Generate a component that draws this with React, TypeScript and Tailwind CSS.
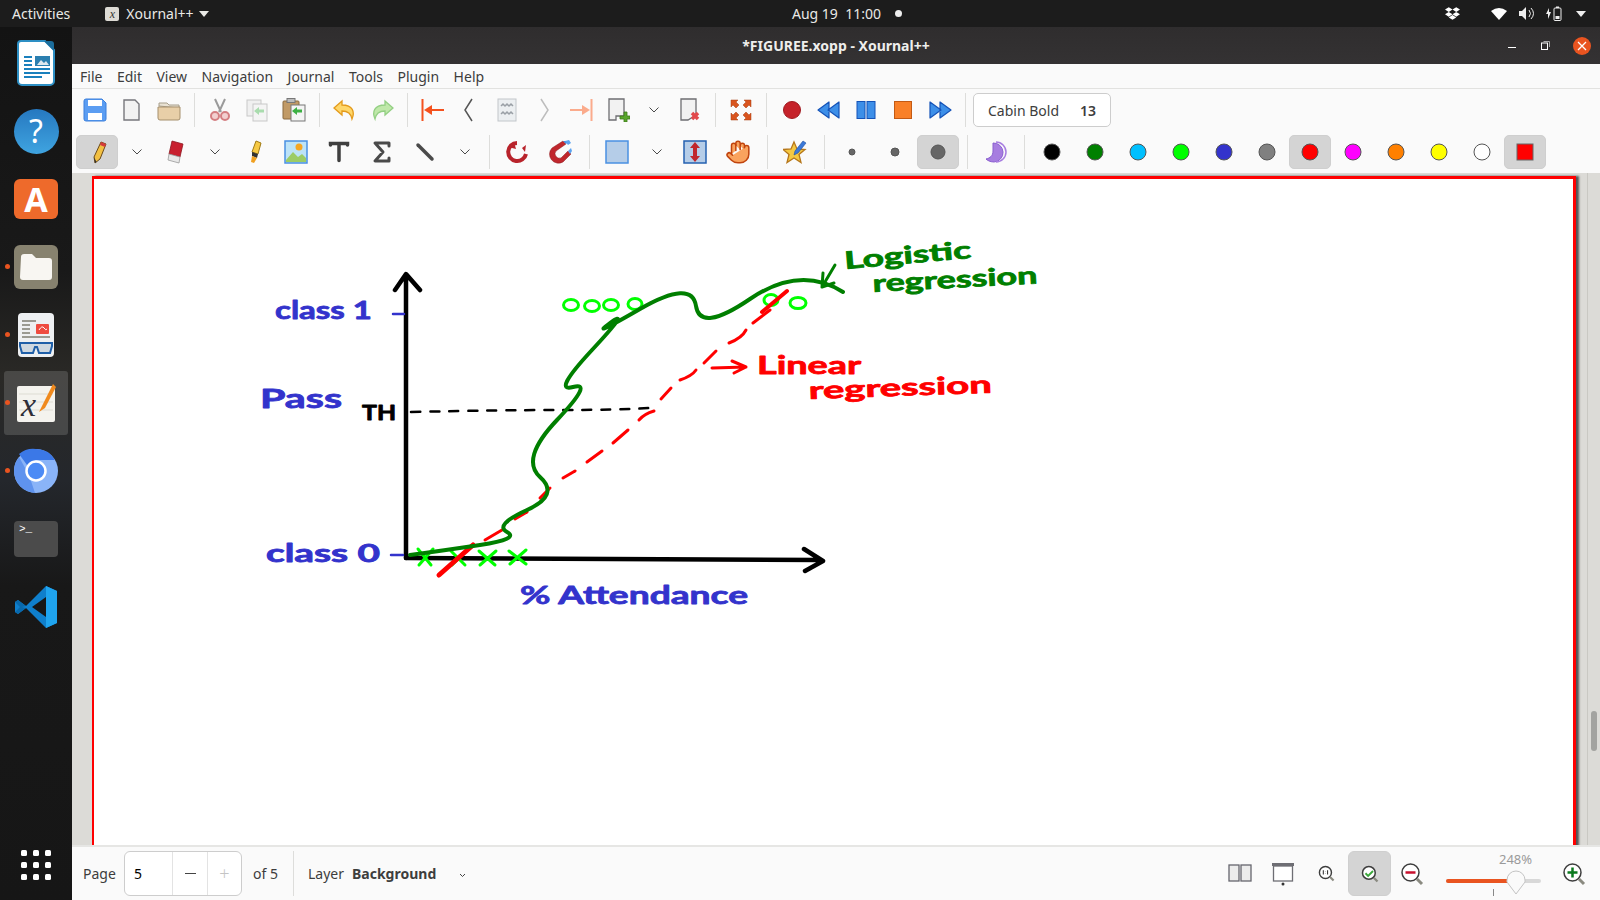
import type { ReactNode } from 'react';
import { Hand } from 'lucide-react';
import { FaDropbox } from 'react-icons/fa';

const menus = ['File', 'Edit', 'View', 'Navigation', 'Journal', 'Tools', 'Plugin', 'Help'];

const colors = [
  { c: '#000000' },
  { c: '#008000' },
  { c: '#00c0ff' },
  { c: '#00ff00' },
  { c: '#3333cc' },
  { c: '#808080' },
  { c: '#ff0000', on: true },
  { c: '#ff00ff' },
  { c: '#ff8000' },
  { c: '#ffff00' },
  { c: '#ffffff' },
];

const Ico = ({ children, size = 24 }: { children: ReactNode; size?: number }) => (
  <svg width={size} height={size} viewBox="0 0 24 24" fill="none">
    {children}
  </svg>
);

// toolbar pieces
const B1 = ({ children }: { children: ReactNode }) => (
  <div className="w-[37px] h-[34px] shrink-0 flex items-center justify-center">{children}</div>
);

const B2 = ({ children, on }: { children: ReactNode; on?: boolean }) => (
  <div className="w-[43px] h-[34px] shrink-0 flex items-center justify-start">
    <div className={`w-[42px] h-[34px] rounded-[5px] flex items-center justify-center ${on ? 'bg-[#d4d4d4] border border-[#cfcfcf]' : ''}`}>
      {children}
    </div>
  </div>
);

const Sep = () => (
  <div className="w-[14px] h-[34px] shrink-0 flex justify-center">
    <div className="w-px h-full bg-[#dddddb]" />
  </div>
);

const Chevron = () => (
  <div className="w-[35px] h-[34px] shrink-0 flex items-center justify-center">
    <svg width="12" height="8" viewBox="0 0 12 8" fill="none">
      <path d="M1.5 1.5 6 6l4.5-4.5" stroke="#4a4a4a" strokeWidth="1" />
    </svg>
  </div>
);

const Dot = ({ c, r = 8 }: { c: string; r?: number }) => (
  <svg width="20" height="20" viewBox="0 0 20 20">
    <circle cx="10" cy="10" r={r} fill={c} stroke="#555" strokeWidth="1" />
  </svg>
);

const Doc = ({ fade }: { fade?: boolean }) => (
  <path d="M4 2h11l4 4v16H4z" fill="#f2f2f2" stroke={fade ? '#b5b5b5' : '#77777c'} strokeWidth="1.4" />
);

const Zoomer = ({ children }: { children?: ReactNode }) => (
  <Ico>
    <circle cx="10.5" cy="10.5" r="8.5" fill="#fff" stroke="#3d3d3d" strokeWidth="1.5" />
    <path d="M17 17l5 5" stroke="#8a8a80" strokeWidth="3" />
    {children}
  </Ico>
);

const Ink = ({ x, y, len, size, color, rot = 0, children }: { x: number; y: number; len: number; size: number; color: string; rot?: number; children: string }) => (
  <text
    x={x}
    y={y}
    textLength={len}
    lengthAdjust="spacingAndGlyphs"
    transform={`rotate(${rot} ${x} ${y})`}
    fontSize={size}
    fill={color}
    stroke={color}
    strokeWidth="0.8"
    strokeLinejoin="round"
    className="font-['Lato',sans-serif] font-bold"
  >
    {children}
  </text>
);

const redDashes = [
  'M485 540 502 530', 'M515 519 527 512', 'M540 498 550 488', 'M563 478 575 471', 'M587 462 602 451',
  'M613 443 628 430', 'M639 420Q644 414 654 411', 'M661 399 671 388', 'M680 380Q692 376 696 370', 'M704 363 716 351',
  'M729 343Q742 338 746 330', 'M753 323 770 310',
];

const Drawing = () => (
  <svg className="absolute left-0 top-0 w-[1479px] h-[800px]" viewBox="94 179 1479 800" fill="none" strokeLinecap="round" strokeLinejoin="round">
    <path d="M411 412Q500 410 560 410T650 408" stroke="#000" strokeWidth="2.5" strokeDasharray="9 10" />
    <path d="M406 558V275M395 290 406 274 420 290" stroke="#000" strokeWidth="4.5" />
    <path d="M406 558 820 560M804 549 823 561 805 571" stroke="#000" strokeWidth="4.5" />

    <g stroke="#00ff00" strokeWidth="3">
      <ellipse cx="571" cy="305" rx="7.5" ry="5.5" />
      <ellipse cx="592" cy="306" rx="7.5" ry="5.5" />
      <ellipse cx="611" cy="305" rx="7.5" ry="5.5" />
      <ellipse cx="635" cy="304" rx="7" ry="5.5" />
      <ellipse cx="771" cy="300" rx="7" ry="5.5" />
      <ellipse cx="798" cy="303" rx="8" ry="5.5" />
      <path d="M418 549 431 565M433 549 419 565" />
      <path d="M451 551 465 565M466 551 452 565" />
      <path d="M479 551 495 565M496 551 480 565" />
      <path d="M509 551 526 564M526 550 510 564" />
    </g>

    <path d="M439 575 473 545" stroke="#ff0000" strokeWidth="5" />
    <g stroke="#ff0000" strokeWidth="3">
      {redDashes.map(d => <path key={d} d={d} />)}
      <path d="M762 312 787 291" strokeWidth="4" />
      <path d="M712 368 746 367M732 361 746 367 734 373" />
    </g>

    <path d="M410 555Q440 551 480 545T507 532 527 510 540 477 557 420 573 387 592 350 610 323 640 309 696 306 750 299 843 292" stroke="#007f00" strokeWidth="4" />
    <path d="M835 265 822 287M823 273 822 287 834 283" stroke="#007f00" strokeWidth="3" />

    <path d="M393 314H404M391 555H403" stroke="#3333cc" strokeWidth="2.5" />

    <Ink x={275} y={319} len={97} size={25} color="#3333cc">class 1</Ink>
    <Ink x={260} y={408} len={82} size={27} color="#3333cc">Pass</Ink>
    <Ink x={362} y={420} len={34} size={20} color="#000000">TH</Ink>
    <Ink x={266} y={562} len={114} size={24} color="#3333cc">class 0</Ink>
    <Ink x={520} y={604} len={228} size={25} color="#3333cc">% Attendance</Ink>
    <Ink x={845} y={269} len={127} size={24} color="#007f00" rot={-5}>Logistic</Ink>
    <Ink x={873} y={292} len={165} size={24} color="#007f00" rot={-3}>regression</Ink>
    <Ink x={757} y={374} len={104} size={25} color="#ff0000">Linear</Ink>
    <Ink x={809} y={399} len={183} size={24} color="#ff0000" rot={-2}>regression</Ink>
  </svg>
);

const DockSlot = ({ children, running, active }: { children: ReactNode; running?: boolean; active?: boolean }) => (
  <div className="relative w-full h-[68px] flex items-center justify-center shrink-0">
    {active && <div className="absolute left-[4px] top-[2px] w-[64px] h-[64px] rounded-[3px] bg-white/15" />}
    {running && <div className="absolute left-[5px] top-[31px] w-[5px] h-[5px] rounded-full bg-[#e95420]" />}
    <div className="relative">{children}</div>
  </div>
);

const Dock = () => (
  <div className="w-[72px] shrink-0 flex flex-col pt-[2px] bg-[linear-gradient(180deg,#131313_0%,#191919_28%,#2a2926_40%,#24272c_52%,#181818_64%,#161616_100%)]">
    <DockSlot>
      <svg width="38" height="46" viewBox="0 0 38 46">
        <path d="M4 1h24l9 9v31a4 4 0 0 1-4 4H5a4 4 0 0 1-4-4V4a3 3 0 0 1 3-3z" fill="#fff" stroke="#2d8fc4" strokeWidth="2" />
        <path d="M27 1h7a3 3 0 0 1 3 3v7z" fill="#1b6d9c" />
        <path d="M7 17h8M7 21h8M7 25h8M7 29h26M7 33h26M7 37h18" stroke="#1a80bd" strokeWidth="2" />
        <rect x="18" y="16" width="15" height="10" fill="#2b7fb0" />
        <path d="M20 25l4-5 3 3 2-2 3 4z" fill="#dfe8ee" />
      </svg>
    </DockSlot>
    <DockSlot>
      <div className="w-[45px] h-[45px] rounded-full bg-[linear-gradient(180deg,#2678c0,#3fa4e0)] flex items-center justify-center text-white text-[32px] font-['Noto_Sans',sans-serif]">?</div>
    </DockSlot>
    <DockSlot>
      <div className="w-[44px] h-[40px] rounded-[6px] bg-[#ee6a2b] flex items-center justify-center text-white text-[34px] leading-none font-bold font-['Noto_Sans',sans-serif]">A</div>
    </DockSlot>
    <DockSlot running>
      <div className="w-[44px] h-[44px] rounded-[6px] bg-[#87826f] flex items-center justify-center">
        <svg width="34" height="28" viewBox="0 0 34 28">
          <path d="M2 4a3 3 0 0 1 3-3h8l4 4h13a3 3 0 0 1 3 3v16a3 3 0 0 1-3 3H4a3 3 0 0 1-3-3z" fill="#f8f6f2" />
        </svg>
      </div>
    </DockSlot>
    <DockSlot running>
      <svg width="38" height="46" viewBox="0 0 38 46">
        <rect x="1" y="1" width="36" height="44" rx="4" fill="#eef0f2" />
        <path d="M5 9h14M5 13h8M5 17h8M5 21h8M5 25h28" stroke="#9a9a92" strokeWidth="2" />
        <rect x="19" y="12" width="13" height="10" rx="1" fill="#ee4b40" />
        <path d="M22 18q3-5 5-2t3 1" stroke="#fff" fill="none" />
        <path d="M3 31h32v3l-2 7H22l-2-6h-2l-2 6H5l-2-7z" fill="#cfd8e0" stroke="#1f5fa8" strokeWidth="2" />
      </svg>
    </DockSlot>
    <DockSlot running active>
      <svg width="42" height="42" viewBox="0 0 42 42">
        <rect x="2" y="4" width="38" height="36" rx="2" fill="#f4f3ee" />
        <path d="M4 12h34M4 20h34M4 28h34" stroke="#dddcd3" />
        <text x="6" y="34" fontSize="34" fill="#2e2e38" className="font-['Liberation_Serif',serif] italic">x</text>
        <path d="M38 2 27 24l-3 6 6-4L41 5z" fill="#f08a1e" />
      </svg>
    </DockSlot>
    <DockSlot running>
      <svg width="46" height="46" viewBox="0 0 46 46">
        <circle cx="23" cy="23" r="22" fill="#8ab4f8" />
        <path d="M23 1a22 22 0 0 1 19 11H23l-9 5-8-11A22 22 0 0 1 23 1z" fill="#3b78e7" />
        <path d="M1 23A22 22 0 0 1 6 9l10 18 6 18A22 22 0 0 1 1 23z" fill="#5f93ee" />
        <circle cx="23" cy="23" r="9.5" fill="#4c8bf5" stroke="#fff" strokeWidth="2.5" />
      </svg>
    </DockSlot>
    <DockSlot>
      <div className="w-[44px] h-[36px] rounded-[4px] bg-[#4b4b4b] relative">
        <span className="absolute left-[5px] top-[0px] text-white text-[11px] leading-[16px] font-['Liberation_Mono',monospace]">&gt;_</span>
      </div>
    </DockSlot>
    <DockSlot>
      <svg width="44" height="44" viewBox="0 0 44 44">
        <path d="M32 1 12 21 4 15 1 17v10l3 2 8-6 20 20 11-5V6z" fill="#0f7fcc" />
        <path d="M32 1l11 5v32l-11 5z" fill="#1fa4ef" />
        <path d="M32 12v20L18 22z" fill="#171717" />
        <path d="M1 17l3-2 8 6-4 1 4 1-8 6-3-2 5-5z" fill="#0868ac" />
      </svg>
    </DockSlot>
    <div className="mt-auto h-[70px] flex items-center justify-center">
      <div className="grid grid-cols-3 gap-x-[6px] gap-y-[6px]">
        {Array.from({ length: 9 }).map((_, i) => (
          <div key={i} className="w-[6px] h-[6px] rounded-[1.5px] bg-white" />
        ))}
      </div>
    </div>
  </div>
);

const TopBar = () => (
  <div className="h-[27px] shrink-0 flex items-center bg-[#1c1c1c] text-[#e9e9e6] text-[14px] font-['Noto_Sans',sans-serif]">
    <div className="w-[792px] shrink-0 flex items-center">
      <span className="ml-[12px]">Activities</span>
      <div className="ml-[35px] w-[14px] h-[14px] rounded-[2px] bg-[#dddbd5] flex items-center justify-center text-[#333] text-[12px] leading-none italic font-['Liberation_Serif',serif]">x</div>
      <span className="ml-[7px]">Xournal++</span>
      <svg className="ml-[5px]" width="10" height="6" viewBox="0 0 10 6"><path d="M0 0h10L5 6z" fill="#e9e9e6" /></svg>
    </div>
    <span className="whitespace-pre">Aug 19  11:00</span>
    <div className="ml-[14px] w-[7px] h-[7px] rounded-full bg-[#eeeeee]" />
    <div className="ml-auto flex items-center pr-[14px]">
      <FaDropbox className="mr-[31px] text-[15px] text-white" />
      <svg className="mr-[12px]" width="16" height="13" viewBox="0 0 16 13"><path d="M0 4Q8-2 16 4l-8 9z" fill="#fff" /></svg>
      <svg className="mr-[12px]" width="15" height="13" viewBox="0 0 15 13">
        <path d="M0 4h3l4-4v13L3 9H0z" fill="#eee" />
        <path d="M10 3q3 3.500 0 7M12 1q5 5.500 0 11" stroke="#eee" fill="none" />
      </svg>
      <svg className="mr-[14px]" width="16" height="15" viewBox="0 0 16 15">
        <path d="M3 2 0 8h2v5l3-7H3z" fill="#eee" />
        <rect x="8" y="2" width="7" height="12.500" rx="1" fill="none" stroke="#eee" />
        <rect x="9.500" y="10" width="4" height="3" fill="#eee" />
        <rect x="10" y="0.500" width="3" height="1.500" fill="#eee" />
      </svg>
      <svg width="10" height="6" viewBox="0 0 10 6"><path d="M0 0h10L5 6z" fill="#eee" /></svg>
    </div>
  </div>
);

const TitleBar = () => (
  <div className="h-[37px] shrink-0 grid grid-cols-[1fr_auto_1fr] items-center bg-[linear-gradient(180deg,#2f2d2e,#343233)] font-['Noto_Sans',sans-serif]">
    <div />
    <span className="text-[#eeeeec] text-[14px] font-bold">*FIGUREE.xopp - Xournal++</span>
    <div className="flex items-center justify-end pr-[9px]">
      <div className="w-[8px] h-px bg-white mr-[25px] mt-[3px]" />
      <svg className="mr-[23px]" width="9" height="9" viewBox="0 0 9 9" fill="none">
        <rect x="0.500" y="2" width="6" height="6.500" stroke="#fff" />
        <path d="M2.500 0.500H8.500V6" stroke="#aaa" />
      </svg>
      <div className="w-[18px] h-[18px] rounded-full bg-[#e95420] flex items-center justify-center">
        <svg width="10" height="10" viewBox="0 0 10 10"><path d="M1 1l8 8M9 1 1 9" stroke="#fff" strokeWidth="1.300" /></svg>
      </div>
    </div>
  </div>
);

const MenuBar = () => (
  <div className="h-[25px] shrink-0 flex items-center pl-[8px] gap-[14.500px] bg-[#fafafa] border-b border-[#e2e2e0] text-[14px] text-[#3d3d3d] font-['Noto_Sans',sans-serif]">
    {menus.map(m => <span key={m}>{m}</span>)}
  </div>
);

const ToolbarTop = () => (
  <div className="h-[42px] shrink-0 flex items-center pl-[4px] bg-[#fafafa]">
    <B1>
      <Ico>
        <path d="M3 1h16l4 4v16a2 2 0 0 1-2 2H3a2 2 0 0 1-2-2V3a2 2 0 0 1 2-2z" fill="#5b9df2" stroke="#3a7fdc" />
        <rect x="5" y="2" width="14" height="6" fill="#fff" />
        <rect x="5" y="15" width="14" height="7" fill="#fff" />
      </Ico>
    </B1>
    <B1><Ico><Doc /></Ico></B1>
    <B1>
      <Ico>
        <path d="M2 8V5h8l2 2h10v3z" fill="#e9e2d4" stroke="#a89f8c" />
        <path d="M1 9h22v11a2 2 0 0 1-2 2H3a2 2 0 0 1-2-2z" fill="#e8cfa8" stroke="#a58f6d" />
      </Ico>
    </B1>
    <Sep />
    <B1>
      <Ico>
        <path d="M7 1l6 13M17 1l-6 13" stroke="#9b9b9b" strokeWidth="2" />
        <circle cx="7" cy="18" r="4" fill="#f2d0d0" stroke="#d47f82" strokeWidth="2" />
        <circle cx="17" cy="18" r="4" fill="#f2d0d0" stroke="#d47f82" strokeWidth="2" />
      </Ico>
    </B1>
    <B1>
      <Ico>
        <rect x="2" y="2" width="14" height="16" fill="#f0f0f0" stroke="#c8c8c8" />
        <rect x="8" y="6" width="14" height="17" fill="#f4f4f4" stroke="#c8c8c8" />
        <path d="M9 13l5-4v2.500h5v3h-5V17z" fill="#a9dcae" />
      </Ico>
    </B1>
    <B1>
      <Ico>
        <rect x="1" y="3" width="16" height="18" rx="1" fill="#c19a66" stroke="#8a6b40" />
        <rect x="5" y="0.500" width="8" height="4" fill="#bbb" stroke="#777" />
        <rect x="9" y="7" width="14" height="16" fill="#f4f4f4" stroke="#777" />
        <path d="M10 13l5-4v2.500h5v3h-5V17z" fill="#3cb043" />
      </Ico>
    </B1>
    <Sep />
    <B1>
      <Ico>
        <path d="M9 3 1 10l8 7v-4c6 0 9 2 10 8 3-7 1-14-10-14z" fill="#ffd76a" stroke="#e39a1b" strokeWidth="1.300" />
      </Ico>
    </B1>
    <B1>
      <Ico>
        <path d="M15 3l8 7-8 7v-4c-6 0-9 2-10 8-3-7-1-14 10-14z" fill="#bfe8a9" stroke="#93cf83" strokeWidth="1.300" />
      </Ico>
    </B1>
    <Sep />
    <B1>
      <Ico>
        <path d="M1.500 1v22" stroke="#f4511e" strokeWidth="2" />
        <path d="M23 12H6" stroke="#f4511e" strokeWidth="2" />
        <path d="M11 7 3 12l8 5z" fill="#f4511e" />
      </Ico>
    </B1>
    <B1>
      <Ico><path d="M14 1 7 12l7 11" stroke="#555" strokeWidth="1.500" /></Ico>
    </B1>
    <B1>
      <Ico>
        <rect x="3" y="1" width="18" height="22" fill="#eceff1" stroke="#c2c6ca" />
        <path d="M6 8l2-2 2 2 2-2 2 2 2-2 2 2M6 16l2-2 2 2 2-2 2 2 2-2 2 2" stroke="#9aa0a6" strokeWidth="1.500" />
      </Ico>
    </B1>
    <B1>
      <Ico><path d="M9 1l7 11-7 11" stroke="#bdbdbd" strokeWidth="1.500" /></Ico>
    </B1>
    <B1>
      <Ico>
        <path d="M22.500 1v22" stroke="#fbab8c" strokeWidth="2" />
        <path d="M1 12h17" stroke="#fbab8c" strokeWidth="2" />
        <path d="M13 7l8 5-8 5z" fill="#fbab8c" />
      </Ico>
    </B1>
    <B1>
      <Ico>
        <path d="M3 1h15v17H10v4H3z" fill="#f2f2f2" stroke="#6e6e72" strokeWidth="1.300" />
        <path d="M14 18h4v-4h3v4h3v3h-3v3h-3v-3h-4z" fill="#58a62b" stroke="#3d7a1a" strokeWidth="0.800" />
      </Ico>
    </B1>
    <Chevron />
    <B1>
      <Ico>
        <path d="M3 1h15v16l-8 5H3z" fill="#f2f2f2" stroke="#6e6e72" strokeWidth="1.300" />
        <path d="M14 15l6 6M20 15l-6 6" stroke="#e2494c" strokeWidth="3.500" />
      </Ico>
    </B1>
    <Sep />
    <B1>
      <Ico>
        <g fill="#d9541e" stroke="#a63e12" strokeWidth="0.500">
          <path d="M2 2h7L7 4l3 3-3 3-3-3-2 2z" />
          <path d="M22 2h-7l2 2-3 3 3 3 3-3 2 2z" />
          <path d="M2 22h7l-2-2 3-3-3-3-3 3-2-2z" />
          <path d="M22 22h-7l2-2-3-3 3-3 3 3 2-2z" />
        </g>
      </Ico>
    </B1>
    <Sep />
    <B1>
      <Ico><circle cx="12" cy="12" r="8.500" fill="#c5222a" stroke="#a01a20" /></Ico>
    </B1>
    <B1>
      <Ico>
        <path d="M12 4v16L1 12zM22 4v16L11 12z" fill="#3d8fe8" stroke="#1553b8" strokeWidth="1.200" strokeLinejoin="round" />
      </Ico>
    </B1>
    <B1>
      <Ico>
        <rect x="3" y="3.500" width="8" height="17" fill="#3d8fe8" stroke="#1553b8" />
        <rect x="13" y="3.500" width="8" height="17" fill="#3d8fe8" stroke="#1553b8" />
      </Ico>
    </B1>
    <B1>
      <Ico><rect x="3.500" y="3.500" width="17" height="17" fill="#f98028" stroke="#c35a14" /></Ico>
    </B1>
    <B1>
      <Ico>
        <path d="M2 4v16l11-8zM12 4v16l11-8z" fill="#3d8fe8" stroke="#1553b8" strokeWidth="1.200" strokeLinejoin="round" />
      </Ico>
    </B1>
    <Sep />
    <div className="ml-px w-[138px] h-[34px] rounded-[5px] border border-[#cdcdcd] bg-white flex items-center justify-between pl-[14px] pr-[14px] text-[14px] text-[#3d3d3d] font-['Noto_Sans',sans-serif]">
      <span>Cabin Bold</span>
      <span className="font-semibold">13</span>
    </div>
  </div>
);

const ToolbarBottom = () => (
  <div className="h-[42px] shrink-0 flex items-center pl-[4px] bg-[#fafafa]">
    <B2 on>
      <Ico>
        <path d="M16 2l5 2-6 15-5 4-1-6z" fill="#f2c042" stroke="#6b4a1a" strokeWidth="1" />
        <path d="M16 2l5 2-1 3-5-2z" fill="#d43a3a" />
        <path d="M9 17l1 6 1.500-1z" fill="#333" />
      </Ico>
    </B2>
    <Chevron />
    <B2>
      <Ico>
        <path d="M9 1l11 3-3 13-11-3z" fill="#c8202f" stroke="#8d1620" strokeWidth="0.800" />
        <path d="M6 14l11 3-1 6-11-3z" fill="#e8e8e8" stroke="#999" strokeWidth="0.800" />
      </Ico>
    </B2>
    <Chevron />
    <B2>
      <Ico>
        <path d="M15 1l5 2-3 11-6-2z" fill="#f6c944" stroke="#a07a14" />
        <path d="M11 12l6 2-1 4-5-2z" fill="#333" />
        <path d="M11 16l5 2-3 5-3-1z" fill="#f0a020" />
      </Ico>
    </B2>
    <B2>
      <Ico>
        <rect x="1" y="1" width="22" height="22" fill="#bde3f7" stroke="#4a90e2" strokeWidth="1.500" />
        <circle cx="15" cy="7" r="3.500" fill="#f5a623" />
        <path d="M2 20l7-8 5 5 4-3 4 4v4H2z" fill="#9ccc65" />
      </Ico>
    </B2>
    <B2>
      <Ico><path d="M3.500 5V3.500h17V5M12 3.500v17" stroke="#3f3f3f" strokeWidth="3.500" strokeLinecap="round" /></Ico>
    </B2>
    <B2>
      <Ico><path d="M19 6V3H5l8 9-8 9h14v-3" stroke="#4a4a4a" strokeWidth="3" strokeLinecap="round" strokeLinejoin="round" /></Ico>
    </B2>
    <B2>
      <Ico><path d="M5 5l14 14" stroke="#4a4a4a" strokeWidth="3.500" strokeLinecap="round" /></Ico>
    </B2>
    <Chevron />
    <Sep />
    <B2>
      <Ico>
        <path d="M21 14a9 9 0 1 1-9-11" stroke="#b8232b" strokeWidth="4" />
        <path d="M3 7 9 2l2 7z" fill="#b8232b" />
        <path d="M21 5l-1 7-3-4z" fill="#b8232b" />
      </Ico>
    </B2>
    <B2>
      <Ico>
        <path d="M18 4 8 11a4.500 4.500 0 0 0 5 7l7-7 3 3-8 8a9 9 0 0 1-11-14L15 1z" fill="#c0272d" stroke="#8a1a1f" strokeWidth="0.500" />
        <path d="M15 1l3 3 2-2-1-1z" fill="#4a90e2" />
        <path d="M17 1l4-1 2 3-3 2zM20 11l3-3 1 3-2 3z" fill="#5ba3f0" />
      </Ico>
    </B2>
    <Sep />
    <B2>
      <Ico><rect x="1" y="1" width="22" height="22" fill="#b5cde8" stroke="#4a90e2" strokeWidth="1.500" /></Ico>
    </B2>
    <Chevron />
    <B2>
      <Ico>
        <rect x="1" y="1" width="22" height="22" fill="#b5cde8" stroke="#2460b0" strokeWidth="1.500" />
        <path d="M12 2l-5 6h3v8H7l5 6 5-6h-3V8h3z" fill="#c0272d" />
      </Ico>
    </B2>
    <B2>
      <Hand size={26} fill="#faa35e" stroke="#c0440e" strokeWidth={1.4} />
    </B2>
    <Sep />
    <B2>
      <Ico>
        <path d="M11 2l3 7 8 .5-6 5 2 8-7-4.500-7 4.500 2-8-6-5 8-.5z" fill="#f5c842" stroke="#b5761a" strokeWidth="1.300" />
        <path d="M20 1l3 2-8 10-4 2 1-4z" fill="#3b78d8" stroke="#1f4f9e" strokeWidth="0.600" />
      </Ico>
    </B2>
    <Sep />
    <B2><Dot c="#666" r={3} /></B2>
    <B2><Dot c="#666" r={4} /></B2>
    <B2 on><Dot c="#666" r={7} /></B2>
    <Sep />
    <B2>
      <Ico>
        <path d="M10 3a9.500 9.500 0 0 1 1 19c-4 0-7-2-8-3 4-1 7-3 7-8z" fill="#a77de0" stroke="#8a5fd0" />
        <path d="M13 2a10 10 0 0 1 0 20" stroke="#a77de0" strokeWidth="1.500" />
      </Ico>
    </B2>
    <Sep />
    {colors.map(k => (
      <B2 key={k.c} on={k.on}><Dot c={k.c} /></B2>
    ))}
    <B2 on>
      <svg width="18" height="18" viewBox="0 0 18 18"><rect x="1" y="1" width="16" height="16" fill="#ff0000" stroke="#666" /></svg>
    </B2>
  </div>
);

const Canvas = () => (
  <div className="flex-1 min-h-0 flex overflow-hidden bg-[#dcdbd7]">
    <div className="relative ml-[20px] mt-[3px] w-[1484px] h-[800px] shrink-0 bg-white border-[3px] border-b-0 border-[#ff0000] border-l-2 shadow-[3px_0_2px_#555]">
      <Drawing />
    </div>
    <div className="relative ml-[11px] flex-1 border-l border-[#c9c8c3]">
      <div className="absolute left-[3px] top-[538px] w-[6px] h-[40px] rounded-full bg-[#a3a3a0]" />
    </div>
  </div>
);

const BottomBar = () => (
  <div className="h-[55px] shrink-0 flex items-center pl-[11px] pr-[4px] bg-[#fafafa] border-t-2 border-[#e6e6e4] text-[14px] text-[#3d3d3d] font-['Noto_Sans',sans-serif]">
    <span className="w-[41px]">Page</span>
    <div className="w-[118px] h-[45px] flex items-stretch rounded-[6px] border border-[#cdcdcd] bg-white">
      <div className="w-[47px] flex items-center pl-[9px] text-black">5</div>
      <div className="w-[35px] flex items-center justify-center border-l border-[#e3e3e3]"><div className="w-[11px] h-px bg-[#444]" /></div>
      <div className="flex-1 flex items-center justify-center border-l border-[#e3e3e3] text-[#c4c4c4] text-[18px] font-light">+</div>
    </div>
    <span className="ml-[11px] w-[40px]">of 5</span>
    <div className="w-px h-[45px] bg-[#dddddb]" />
    <span className="ml-[14px] w-[44px]">Layer</span>
    <span className="font-bold">Background</span>
    <svg className="ml-[23px] mt-[3px]" width="7" height="5" viewBox="0 0 7 5"><path d="M1 1l2.500 2.500L6 1" stroke="#444" fill="none" /></svg>
    <div className="ml-auto flex items-center">
      <B2>
        <Ico>
          <rect x="1" y="3" width="10" height="16" fill="#ececec" stroke="#66666e" strokeWidth="1.300" />
          <rect x="13" y="3" width="10" height="16" fill="#ececec" stroke="#66666e" strokeWidth="1.300" />
        </Ico>
      </B2>
      <B2>
        <Ico>
          <rect x="1" y="1" width="22" height="3" fill="#6e6e74" />
          <rect x="2.500" y="4" width="19" height="15" fill="#fff" stroke="#6e6e74" strokeWidth="1.300" />
          <circle cx="12" cy="22" r="1.500" fill="#333" />
        </Ico>
      </B2>
      <B2>
        <svg width="17" height="17" viewBox="0 0 24 24" fill="none">
          <circle cx="10.500" cy="10.500" r="8.500" fill="#fff" stroke="#3d3d3d" strokeWidth="2" />
          <path d="M17 17l5 5" stroke="#8a8a80" strokeWidth="3" />
          <path d="M7.500 7.500v6M13.500 7.500v6M10.500 9v.5M10.500 12v.5" stroke="#333" strokeWidth="1.500" />
        </svg>
      </B2>
      <div className="w-[43px] h-[45px] rounded-[6px] bg-[#d4d4d4] border border-[#cfcfcf] flex items-center justify-center">
        <svg width="18" height="18" viewBox="0 0 24 24" fill="none">
          <circle cx="10.500" cy="10.500" r="8.500" fill="#fff" stroke="#3d3d3d" strokeWidth="2" />
          <path d="M17 17l5 5" stroke="#8a8a80" strokeWidth="3" />
          <path d="M6 11l3.500 3.500L16 8" stroke="#3aa83a" strokeWidth="2.500" />
        </svg>
      </div>
      <B2><Zoomer><path d="M5.500 10.500h10" stroke="#c8102e" strokeWidth="2.500" /></Zoomer></B2>
      <div className="relative ml-[12px] w-[95px] h-[53px]">
        <span className="absolute left-[53px] top-[3px] text-[#9a9a9a] text-[13px]">248%</span>
        <div className="absolute left-0 top-[32px] w-[95px] h-[4px] rounded-full bg-[#d8d8d8]" />
        <div className="absolute left-0 top-[32px] w-[62px] h-[4px] rounded-l-full bg-[#e95420]" />
        <div className="absolute left-[47px] top-[42px] w-px h-[7px] bg-[#888]" />
        <svg className="absolute left-[60px] top-[23px]" width="20" height="26" viewBox="0 0 20 26">
          <path d="M1 10a9 9 0 0 1 18 0v2l-9 12-9-12z" fill="#fafafa" stroke="#c4c4c4" />
        </svg>
      </div>
      <div className="ml-[12px]">
        <B2><Zoomer><path d="M5.500 10.500h10M10.500 5.500v10" stroke="#0b7a1e" strokeWidth="2.500" /></Zoomer></B2>
      </div>
    </div>
  </div>
);

export default function App() {
  return (
    <div className="w-[1600px] h-[900px] flex flex-col overflow-hidden bg-black">
      <TopBar />
      <div className="flex-1 min-h-0 flex">
        <Dock />
        <div className="flex-1 min-w-0 flex flex-col">
          <TitleBar />
          <MenuBar />
          <ToolbarTop />
          <ToolbarBottom />
          <Canvas />
          <BottomBar />
        </div>
      </div>
    </div>
  );
}
